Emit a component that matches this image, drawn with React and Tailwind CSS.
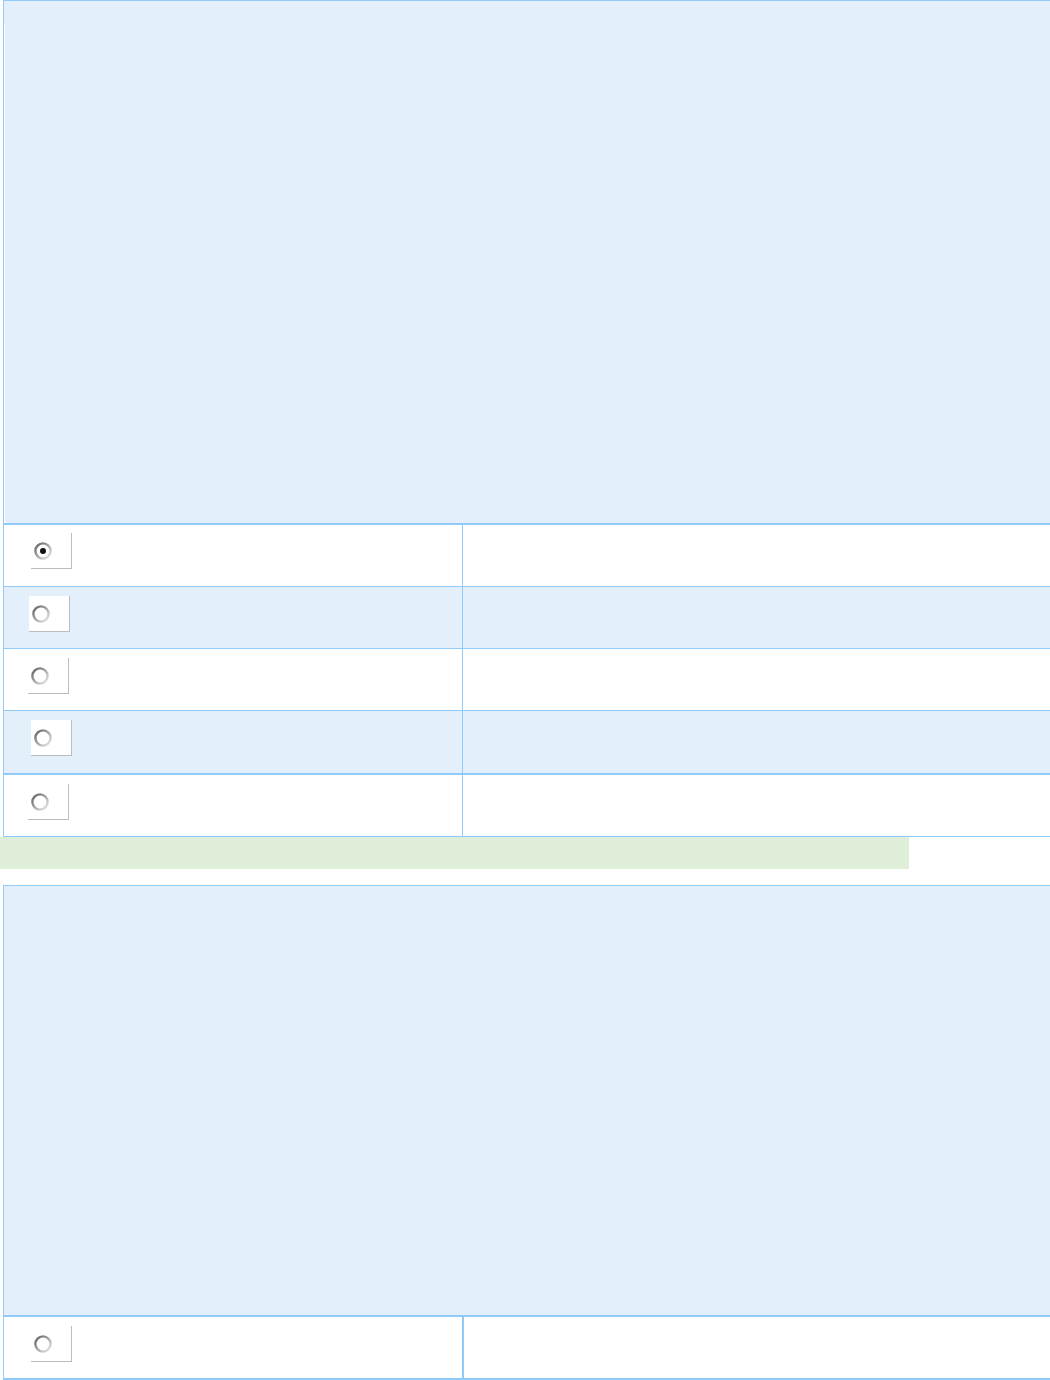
import React from 'react';

function Radio({ checked }) {
  const id = checked ? 'rg1' : 'rg0';
  return (
    <svg width="20" height="20" viewBox="0 0 20 20">
      <defs>
        <linearGradient id={id} x1="0" y1="0" x2="1" y2="1">
          <stop offset="0" stopColor="#5e5e5e" />
          <stop offset="0.5" stopColor="#a8a8a8" />
          <stop offset="1" stopColor="#ececec" />
        </linearGradient>
      </defs>
      <circle cx="10" cy="10" r="7.6" fill="#fff" stroke={`url(#${id})`} strokeWidth="2.4" />
      {checked && <circle cx="10" cy="10" r="3" fill="#111" />}
    </svg>
  );
}

function RadioBox({ checked, offset = 'ml-[27px]' }) {
  return (
    <div className={`${offset} w-[41px] h-[36px] bg-white border-r border-b border-[#bdbdbd] flex items-center pl-[2px]`}>
      <Radio checked={checked} />
    </div>
  );
}

function Row({ checked, blue, h, offset, pt = 'pt-[9px]', border = 'border-b' }) {
  return (
    <div className={`flex ${h} ${blue ? 'bg-[#e3f0fb]' : 'bg-white'} ${border} border-[#90caf9]`}>
      <div className={`w-[459px] flex items-start ${pt} border-r border-[#90caf9]`}>
        <RadioBox checked={checked} offset={offset} />
      </div>
      <div className="flex-1" />
    </div>
  );
}

export default function App() {
  return (
    <div className="w-[1050px] bg-white">
      <div className="ml-[3px] border-l border-t border-b border-[#90caf9]">
        <div className="h-[524px] bg-[#e3f0fb] border-b-2 border-[#90caf9] relative">
          <div className="absolute left-0 top-[23px] bottom-0 w-px bg-white" />
        </div>
        <Row checked h="h-[62px]" offset="ml-[27px]" pt="pt-[8px]" />
        <Row blue h="h-[62px]" offset="ml-[25px]" />
        <Row h="h-[62px]" offset="ml-[24px]" />
        <Row blue h="h-[64px]" offset="ml-[27px]" border="border-b-2" />
        <Row h="h-[61px]" offset="ml-[24px]" border="border-b-0" />
      </div>
      <div className="w-[909px] h-[32px] bg-[#dfeed8]" />
      <div className="mt-[16px] ml-[3px] border-l border-t border-b-2 border-[#90caf9]">
        <div className="h-[431px] bg-[#e3f0fb] border-b-2 border-[#90caf9]" />
        <div className="flex h-[61px] bg-white">
          <div className="w-[460px] flex items-start pt-[9px] border-r-2 border-[#90caf9]">
            <RadioBox offset="ml-[27px]" />
          </div>
          <div className="flex-1" />
        </div>
      </div>
    </div>
  );
}
